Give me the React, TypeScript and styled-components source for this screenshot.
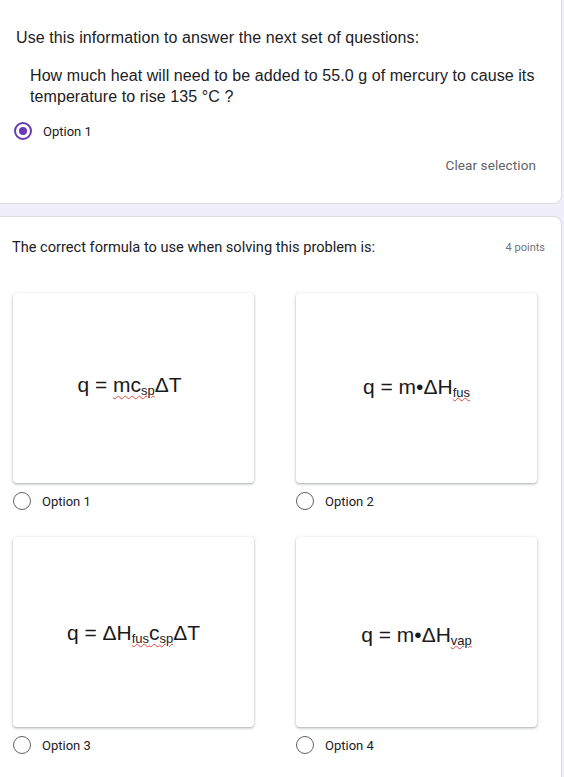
import React from "react";
import styled, { createGlobalStyle } from "styled-components";

const Global = createGlobalStyle`
  html, body { margin: 0; padding: 0; }
  body { background: #f0eef9; font-family: Roboto, "Liberation Sans", Arial, sans-serif; color: #202124; }
  #root { width: 564px; min-height: 777px; overflow: hidden; }
`;

const Page = styled.div`
  display: flex;
  flex-direction: column;
  gap: 12px;
  padding-right: 2px;
`;

const Card = styled.section<{ $top?: boolean }>`
  background: #fff;
  border: 1px solid #dadce0;
  border-left: none;
  ${(p) => (p.$top ? "border-top: none; border-radius: 0 0 8px 0;" : "border-radius: 0 8px 0 0;")}
  display: flex;
  flex-direction: column;
`;

const TopInner = styled.div`
  padding: 28px 25px 28px 16px;
  display: flex;
  flex-direction: column;
`;

const Title = styled.div`
  font-family: "Liberation Sans", Arial, sans-serif;
  font-size: 16px;
  line-height: 20px;
  letter-spacing: 0.1px;
  color: #202124;
`;

const Question = styled.div`
  font-family: "Liberation Sans", Arial, sans-serif;
  font-size: 16px;
  line-height: 21px;
  margin: 17px 0 0 14px;
  color: #202124;
  letter-spacing: 0.08px;
`;

const OptionRow = styled.label<{ $h?: number }>`
  display: flex;
  align-items: center;
  gap: 11px;
  height: ${(p) => p.$h ?? 24}px;
  font-family: Roboto, "Liberation Sans", Arial, sans-serif;
  font-size: 13px;
  color: #202124;
`;

const Radio = styled.span<{ $checked?: boolean }>`
  box-sizing: border-box;
  width: 18px;
  height: 18px;
  border-radius: 50%;
  border: ${(p) => (p.$checked ? "2px solid #673ab7" : "1.5px solid #5f6368")};
  display: flex;
  align-items: center;
  justify-content: center;
  flex-shrink: 0;
  &::after {
    content: "";
    display: ${(p) => (p.$checked ? "block" : "none")};
    width: 8px;
    height: 8px;
    border-radius: 50%;
    background: #673ab7;
  }
`;

const TopOption = styled.div`
  margin: 12px 0 0 -2px;
`;

const ClearRow = styled.div`
  margin-top: 12px;
  display: flex;
  justify-content: flex-end;
  height: 20px;
  align-items: center;
`;

const ClearButton = styled.span`
  font-family: Roboto, "Liberation Sans", Arial, sans-serif;
  font-size: 13.5px;
  color: #5f6368;
  letter-spacing: 0.1px;
`;

const SecondInner = styled.div`
  padding: 20px 16px 40px 12px;
  display: flex;
  flex-direction: column;
`;

const HeaderRow = styled.div`
  display: flex;
  justify-content: space-between;
  align-items: center;
  height: 20px;
`;

const Prompt = styled.div`
  font-family: Roboto, "Liberation Sans", Arial, sans-serif;
  font-size: 14.6px;
  color: #202124;
`;

const Points = styled.div`
  font-family: Roboto, "Liberation Sans", Arial, sans-serif;
  font-size: 11px;
  color: #70757a;
`;

const Grid = styled.div`
  display: grid;
  grid-template-columns: 241px 241px;
  column-gap: 42px;
  row-gap: 18px;
  margin: 36px 0 0 1px;
`;

const Cell = styled.div`
  display: flex;
  flex-direction: column;
`;

const ImageCard = styled.div`
  height: 190px;
  background: #fff;
  border-radius: 4px;
  box-shadow: 0 1px 2px rgba(60, 64, 67, 0.3), 0 1px 3px 1px rgba(60, 64, 67, 0.12);
  display: flex;
  align-items: center;
  justify-content: center;
`;

const Formula = styled.div<{ $dx?: number; $dy?: number }>`
  font-family: "Liberation Sans", Arial, sans-serif;
  font-size: 21px;
  color: #1a1a1a;
  white-space: nowrap;
  transform: translate(${(p) => p.$dx ?? 0}px, ${(p) => p.$dy ?? 0}px);
`;

const Sub = styled.sub`
  font-size: 13px;
  vertical-align: -3px;
  line-height: 0;
`;

const Spell = styled.span`
  text-decoration: underline wavy #e0483e;
  text-decoration-thickness: 1px;
  text-underline-offset: 3px;
`;

const Opt = styled(OptionRow)`
  height: 36px;
`;

const cards = [
  {
    label: "Option 1",
    dx: -4,
    dy: -3,
    f: (
      <>
        q = <Spell>mc<Sub>sp</Sub></Spell>ΔT
      </>
    ),
  },
  {
    label: "Option 2",
    dx: 0,
    dy: -1,
    f: (
      <>
        q = m•ΔH<Spell><Sub>fus</Sub></Spell>
      </>
    ),
  },
  {
    label: "Option 3",
    dx: 0,
    dy: 1,
    f: (
      <>
        q = ΔH<Spell><Sub>fus</Sub>c<Sub>sp</Sub></Spell>ΔT
      </>
    ),
  },
  {
    label: "Option 4",
    dx: 0,
    dy: 3,
    f: (
      <>
        q = m•ΔH<Spell><Sub>vap</Sub></Spell>
      </>
    ),
  },
];

export default function App() {
  return (
    <>
      <Global />
      <Page>
        <Card $top>
          <TopInner>
            <Title>Use this information to answer the next set of questions:</Title>
            <Question>
              How much heat will need to be added to 55.0 g of mercury to cause its temperature to rise 135 °C ?
            </Question>
            <TopOption>
              <OptionRow>
                <Radio $checked />
                Option 1
              </OptionRow>
            </TopOption>
            <ClearRow>
              <ClearButton>Clear selection</ClearButton>
            </ClearRow>
          </TopInner>
        </Card>
        <Card>
          <SecondInner>
            <HeaderRow>
              <Prompt>The correct formula to use when solving this problem is:</Prompt>
              <Points>4 points</Points>
            </HeaderRow>
            <Grid>
              {cards.map((c) => (
                <Cell key={c.label}>
                  <ImageCard>
                    <Formula $dx={c.dx} $dy={c.dy}>{c.f}</Formula>
                  </ImageCard>
                  <Opt>
                    <Radio />
                    {c.label}
                  </Opt>
                </Cell>
              ))}
            </Grid>
          </SecondInner>
        </Card>
      </Page>
    </>
  );
}
